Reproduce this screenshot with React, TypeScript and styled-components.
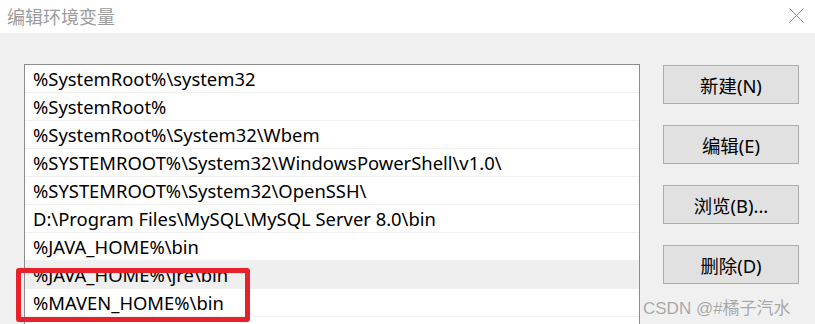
import * as React from 'react';
import styled, { createGlobalStyle } from 'styled-components';

const GlobalStyle = createGlobalStyle`
  html, body {
    margin: 0;
    padding: 0;
    background: #f0f0f0;
  }
  body {
    font-family: "Noto Sans", "Noto Sans CJK SC", sans-serif;
  }
`;

const Window = styled.div`
  position: relative;
  width: 815px;
  height: 324px;
  overflow: hidden;
  display: flex;
  flex-direction: column;
  background: #f0f0f0;
`;

const TitleBar = styled.div`
  height: 33px;
  flex: none;
  background: #ffffff;
  display: flex;
  align-items: center;
  justify-content: space-between;
  padding: 0 11px 2px 7px;
  box-sizing: border-box;
`;

const Title = styled.div`
  font-size: 18px;
  color: #9b9b9b;
  font-family: "Noto Sans CJK SC", sans-serif;
`;

const Body = styled.div`
  flex: 1;
  display: flex;
  gap: 23px;
  padding: 31px 0 0 24px;
`;

const ListBox = styled.div`
  width: 616px;
  box-sizing: border-box;
  border: 1px solid #8c8c8c;
  border-bottom: none;
  background: #ffffff;
  height: 300px;
`;

const Row = styled.div<{ $selected?: boolean }>`
  height: 28px;
  box-sizing: border-box;
  border-bottom: 1px solid #f0f0f0;
  background: ${({ $selected }) => ($selected ? '#efefef' : 'transparent')};
  padding-left: 8px;
  display: flex;
  align-items: center;
  font-size: 18.4px;
  color: #000000;
  white-space: nowrap;
`;

const Buttons = styled.div`
  display: flex;
  flex-direction: column;
  gap: 21px;
  padding-top: 1px;
`;

const Button = styled.div`
  width: 136px;
  height: 39px;
  box-sizing: border-box;
  border: 1px solid #adadad;
  background: #e1e1e1;
  display: flex;
  align-items: center;
  justify-content: center;
  font-size: 18.4px;
  color: #000000;
`;

const Highlight = styled.div`
  position: absolute;
  left: 16px;
  top: 268px;
  width: 234px;
  height: 54px;
  box-sizing: border-box;
  border: 5px solid #e8202a;
  border-radius: 3px;
  pointer-events: none;
`;

const Watermark = styled.div`
  position: absolute;
  left: 643px;
  top: 294px;
  font-size: 17px;
  color: #a6a6a6;
  font-family: "Liberation Sans", "Noto Sans CJK SC", sans-serif;
  text-shadow: 0 0 1px #ffffff;
  white-space: nowrap;
`;

const CloseIcon = () => (
  <svg width="15" height="15" viewBox="0 0 15 15">
    <path d="M0.5 0.5 L14.5 14.5 M14.5 0.5 L0.5 14.5" stroke="#8a8a8a" strokeWidth="1" fill="none" />
  </svg>
);

const paths = [
  '%SystemRoot%\\system32',
  '%SystemRoot%',
  '%SystemRoot%\\System32\\Wbem',
  '%SYSTEMROOT%\\System32\\WindowsPowerShell\\v1.0\\',
  '%SYSTEMROOT%\\System32\\OpenSSH\\',
  'D:\\Program Files\\MySQL\\MySQL Server 8.0\\bin',
  '%JAVA_HOME%\\bin',
  '%JAVA_HOME%\\jre\\bin',
  '%MAVEN_HOME%\\bin',
  '',
];

export default function App() {
  return (
    <>
      <GlobalStyle />
      <Window>
        <TitleBar>
          <Title>编辑环境变量</Title>
          <CloseIcon />
        </TitleBar>
        <Body>
          <ListBox>
            {paths.map((p, i) => (
              <Row key={i} $selected={i === 7}>{p}</Row>
            ))}
          </ListBox>
          <Buttons>
            <Button>新建(N)</Button>
            <Button>编辑(E)</Button>
            <Button>浏览(B)...</Button>
            <Button>删除(D)</Button>
          </Buttons>
        </Body>
        <Highlight />
        <Watermark>CSDN @#橘子汽水</Watermark>
      </Window>
    </>
  );
}
